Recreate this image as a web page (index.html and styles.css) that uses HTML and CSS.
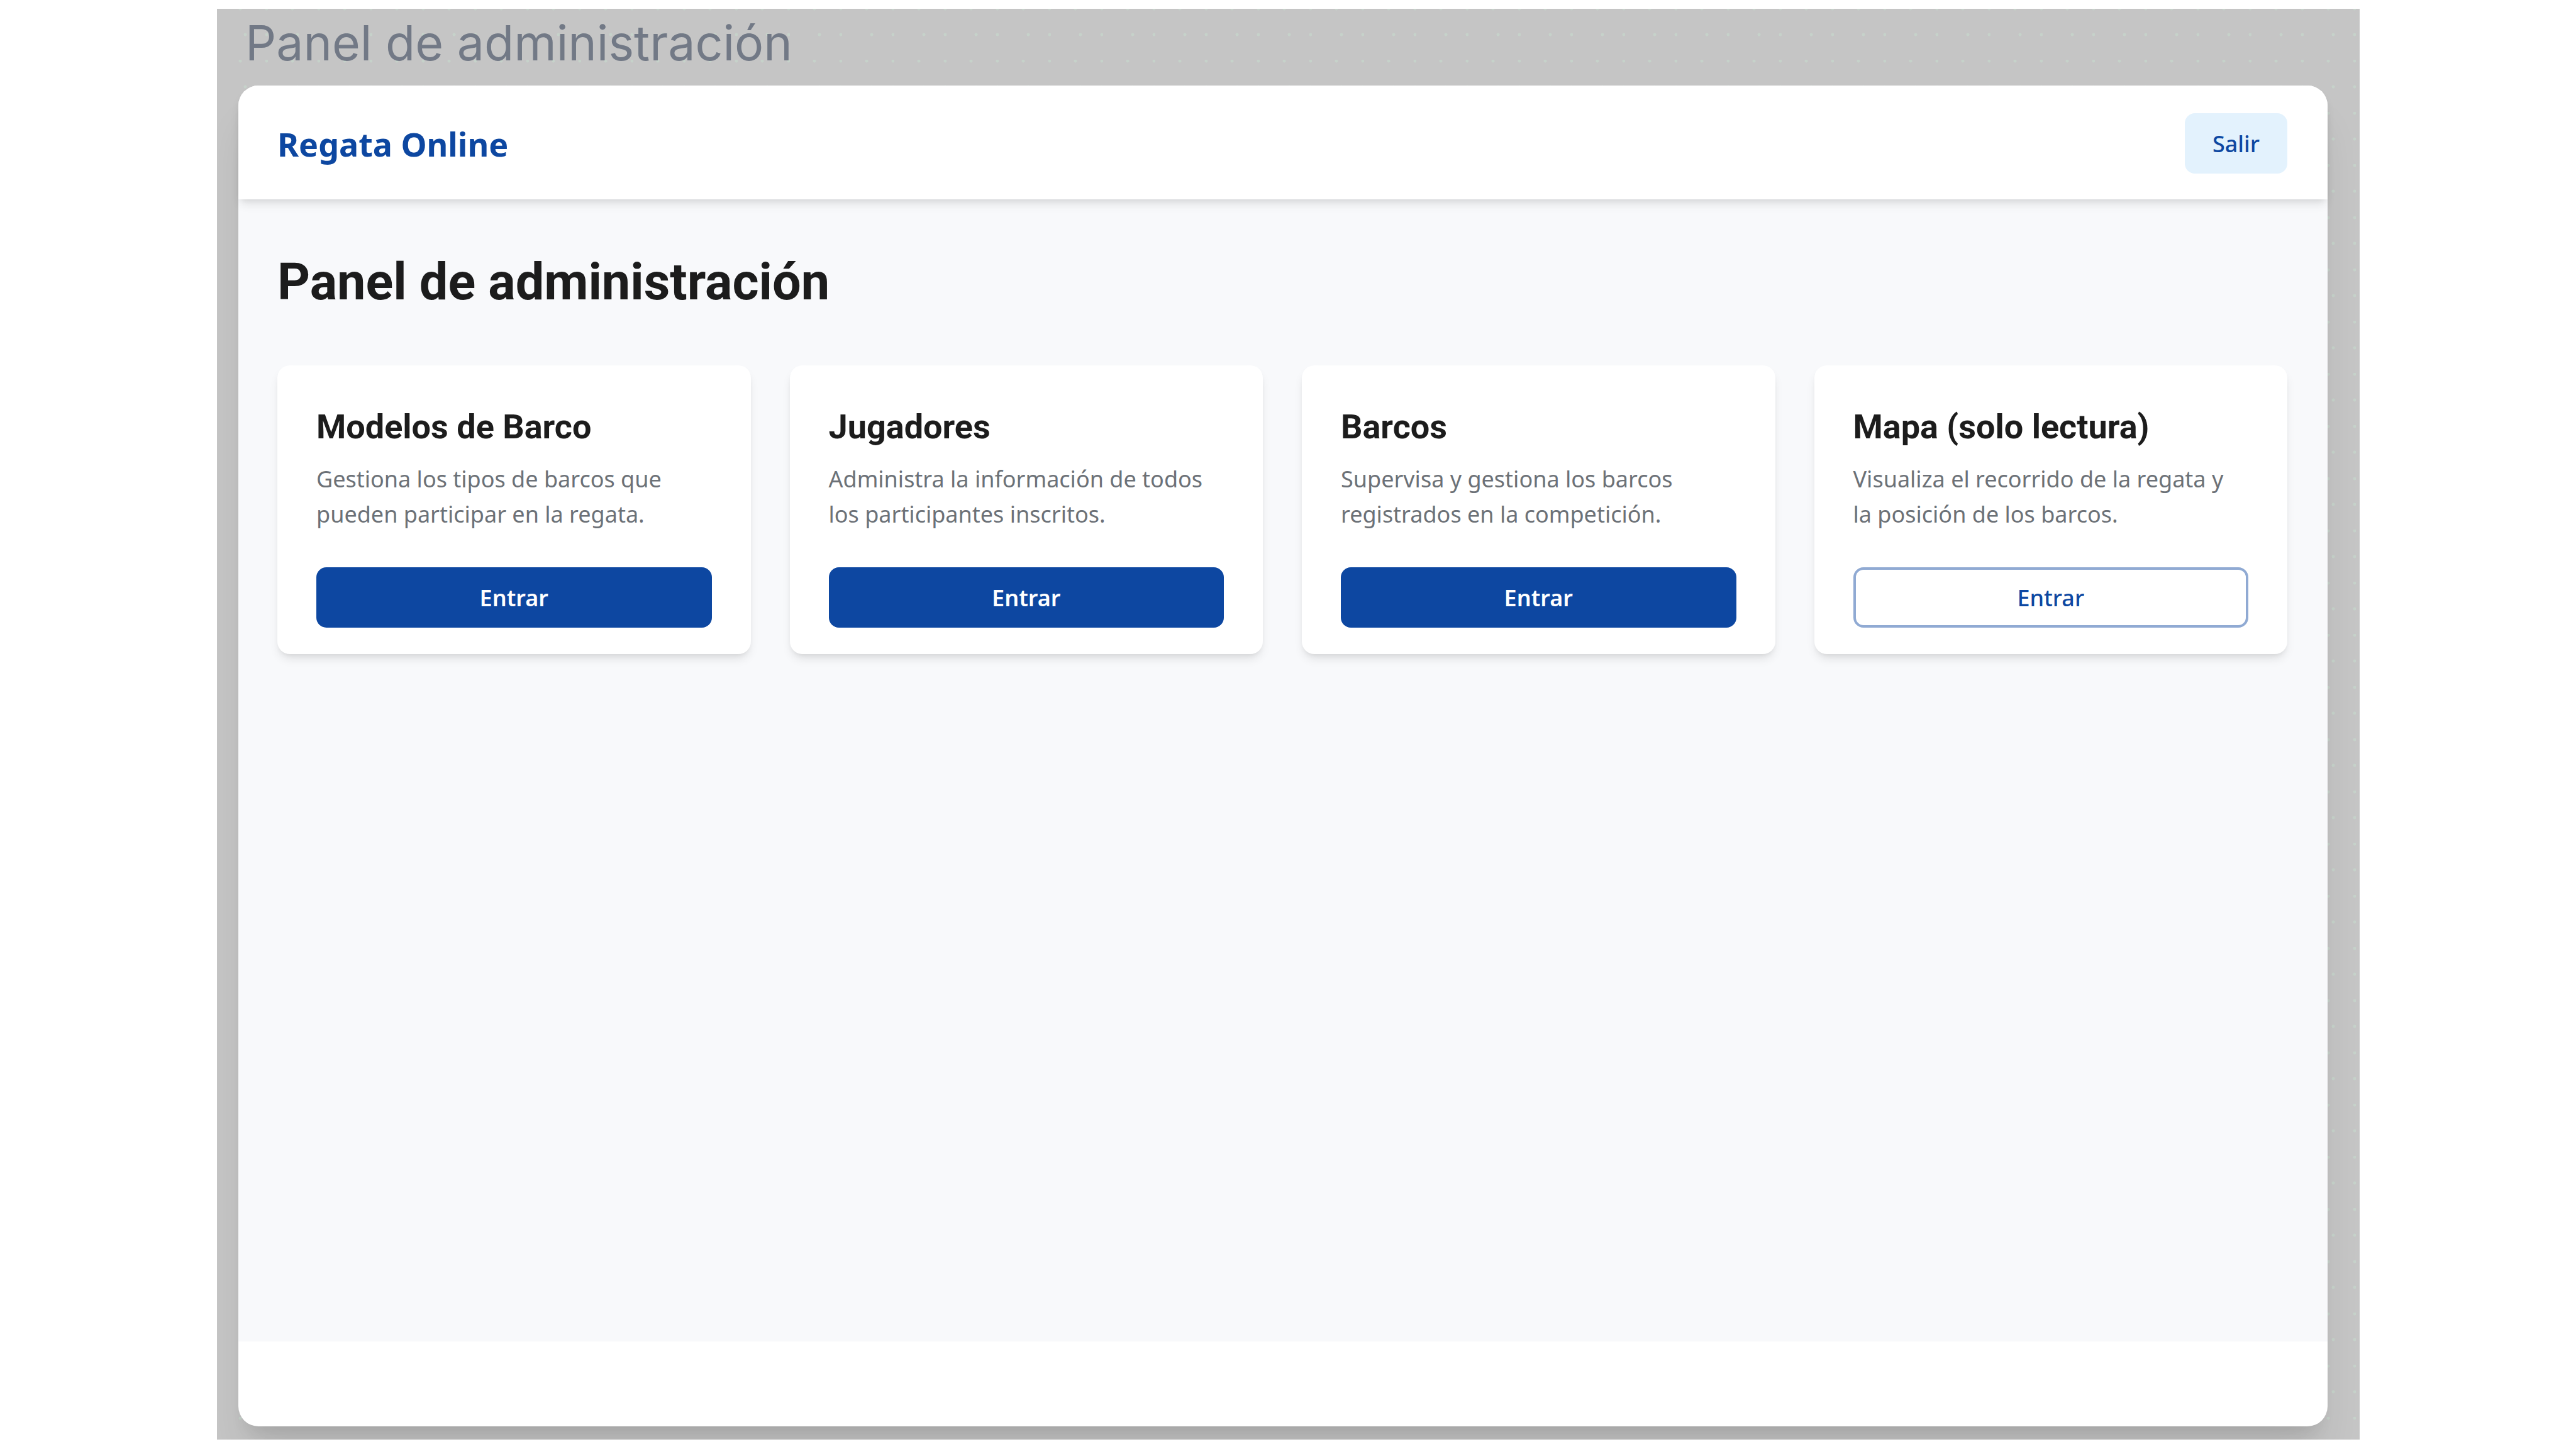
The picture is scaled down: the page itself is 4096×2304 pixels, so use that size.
FILE: index.html
```html
<!DOCTYPE html>
<html lang="es">
<head>
<meta charset="utf-8">
<meta name="viewport" content="width=device-width, initial-scale=1">
<title>Panel de administración</title>
<link rel="stylesheet" href="styles.css">
</head>
<body>
<div class="canvas">
  <p class="frame-label">Panel de administración</p>
  <div class="frame">
    <header class="topbar">
      <span class="brand">Regata Online</span>
      <button class="btn btn-soft" type="button">Salir</button>
    </header>
    <main class="content">
      <h1 class="page-title">Panel de administración</h1>
      <div class="cards">
        <section class="card">
          <h2 class="card-title">Modelos de Barco</h2>
          <p class="card-text">Gestiona los tipos de barcos que pueden participar en la regata.</p>
          <button class="btn btn-primary" type="button">Entrar</button>
        </section>
        <section class="card">
          <h2 class="card-title">Jugadores</h2>
          <p class="card-text">Administra la información de todos los participantes inscritos.</p>
          <button class="btn btn-primary" type="button">Entrar</button>
        </section>
        <section class="card">
          <h2 class="card-title">Barcos</h2>
          <p class="card-text">Supervisa y gestiona los barcos registrados en la competición.</p>
          <button class="btn btn-primary" type="button">Entrar</button>
        </section>
        <section class="card">
          <h2 class="card-title">Mapa (solo lectura)</h2>
          <p class="card-text">Visualiza el recorrido de la regata y la posición de los barcos.</p>
          <button class="btn btn-outline" type="button">Entrar</button>
        </section>
      </div>
    </main>
  </div>
</div>
</body>
</html>
```
FILE: styles.css
```css
* {
  box-sizing: border-box;
}

:root {
  --blue: #0d47a1;
  --ink: #1c1c1c;
  --muted: #6c7177;
  --dot: #c6d2ca;
  --shadow: 0 10px 16px -3px rgba(0, 0, 0, 0.1), 0 5px 10px -5px rgba(0, 0, 0, 0.1);
}

body {
  margin: 0;
  min-height: 100vh;
  padding: 14px 344px 15px 345px;
  display: flex;
  background: #fff;
  font-family: "Noto Sans", sans-serif;
}

h1, h2, p {
  margin: 0;
}

/* Canvas with a faint dot grid */
.canvas {
  flex: 1;
  display: flex;
  flex-direction: column;
  padding: 0 51px 21px 34px;
  overflow: hidden;
  background-color: #c5c5c5;
  background-image:
    radial-gradient(circle at 81px 2px, var(--dot) 2px, transparent 3px),
    radial-gradient(circle at 39px 2px, var(--dot) 2px, transparent 3px),
    radial-gradient(circle at 81px 43px, var(--dot) 2px, transparent 3px),
    radial-gradient(circle at 39px 43px, var(--dot) 2px, transparent 3px);
  background-size: 83px 83px;
  background-position: right 6px top -2px;
}

.frame-label {
  margin-bottom: 14px;
  padding-left: 11px;
  color: #727986;
  font-family: Inter, sans-serif;
  font-size: 77px;
  line-height: 108px;
}

.frame {
  flex: 1;
  display: flex;
  flex-direction: column;
  padding-bottom: 135px;
  border-radius: 32px;
  background: #fff;
  box-shadow: 0 52px 65px -13px rgba(0, 0, 0, 0.1), 0 21px 26px -16px rgba(0, 0, 0, 0.1);
}

.topbar {
  z-index: 1;
  display: flex;
  align-items: center;
  justify-content: space-between;
  padding: 44px 64px 41px 62px;
  border-radius: 32px 32px 0 0;
  background: #fff;
  box-shadow: var(--shadow);
}

.brand {
  padding-top: 2px;
  color: var(--blue);
  font-size: 52px;
  font-weight: 700;
  line-height: 70px;
}

.content {
  flex: 1;
  padding: 84px 64px 84px 62px;
  background: #f8f9fb;
}

.page-title {
  margin-bottom: 84px;
  color: var(--ink);
  font-family: Roboto, sans-serif;
  font-size: 81px;
  font-weight: 700;
  line-height: 96px;
}

.cards {
  display: grid;
  grid-template-columns: repeat(4, 1fr);
  gap: 62px;
}

.card {
  display: flex;
  flex-direction: column;
  padding: 63px 62px 42px;
  border-radius: 20px;
  background: #fff;
  box-shadow: var(--shadow);
}

.card-title {
  margin-bottom: 20px;
  color: var(--ink);
  font-family: Roboto, sans-serif;
  font-size: 54px;
  font-weight: 700;
  line-height: 70px;
}

.card-text {
  margin-bottom: 56px;
  padding-right: 20px;
  color: var(--muted);
  font-size: 36px;
  line-height: 56px;
}

.btn {
  padding: 21px 44px 19px;
  border: 0;
  border-radius: 16px;
  font-family: inherit;
  font-size: 36px;
  font-weight: 500;
  line-height: 56px;
}

.btn-soft {
  background: #e3f2fd;
  color: var(--blue);
}

.btn-primary {
  background: var(--blue);
  color: #fff;
  font-weight: 600;
}

.btn-outline {
  padding: 17px 40px 15px;
  border: 4px solid #90aad3;
  background: #fff;
  color: var(--blue);
}
```
